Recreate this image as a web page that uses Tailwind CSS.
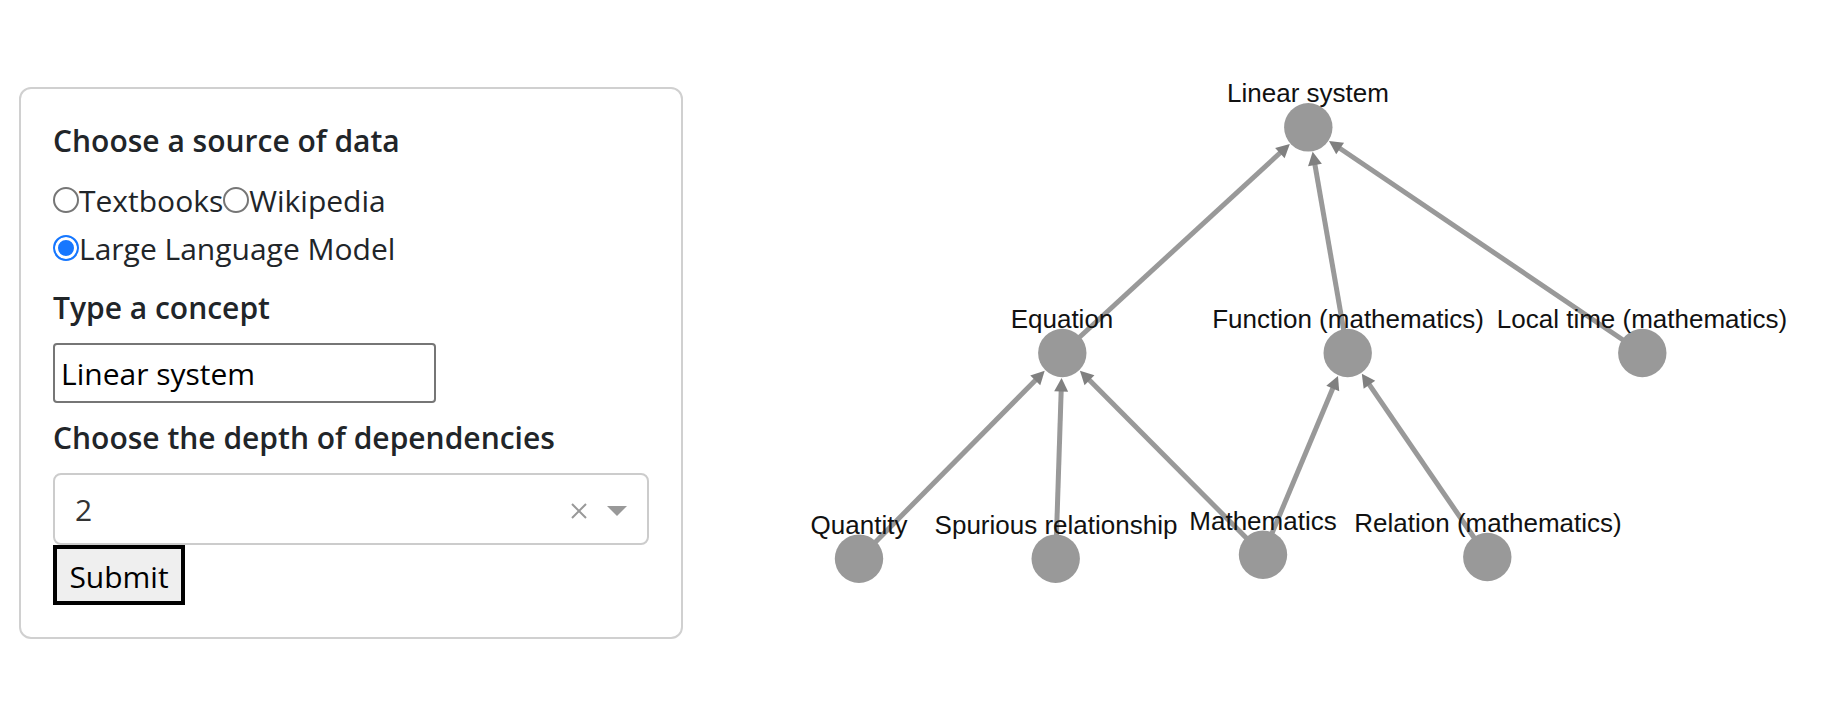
<!DOCTYPE html>
<html lang="en">
<head>
<meta charset="utf-8">
<meta name="viewport" content="width=device-width, initial-scale=1">
<title>Concept dependencies</title>
<script src="https://cdn.jsdelivr.net/npm/@tailwindcss/browser@4"></script>
</head>
<body class="bg-white font-['Open_Sans','Noto_Sans',sans-serif] text-[30px] text-[#212529]">
<main class="grid grid-cols-[664fr_1142fr] items-start pl-[19px]">
  <form class="mt-[87px] rounded-xl border-2 border-[#d0d0d0] p-8" onsubmit="return false">
    <fieldset>
      <legend class="mb-4 leading-[40px] font-semibold">Choose a source of data</legend>
      <div class="flex flex-wrap leading-[48px]">
        <label class="flex"><input type="radio" name="source" class="mt-2.5 size-[26px] appearance-none rounded-full border-2 border-[#767676] bg-white checked:border-[#1677ff] checked:bg-[#1677ff] checked:shadow-[inset_0_0_0_3px_white]">Textbooks</label>
        <label class="flex"><input type="radio" name="source" class="mt-2.5 size-[26px] appearance-none rounded-full border-2 border-[#767676] bg-white checked:border-[#1677ff] checked:bg-[#1677ff] checked:shadow-[inset_0_0_0_3px_white]">Wikipedia</label>
        <label class="flex"><input type="radio" name="source" checked class="mt-2.5 size-[26px] appearance-none rounded-full border-2 border-[#767676] bg-white checked:border-[#1677ff] checked:bg-[#1677ff] checked:shadow-[inset_0_0_0_3px_white]">Large Language Model</label>
      </div>
    </fieldset>
    <label for="concept" class="mt-4 mb-4 block leading-[38px] font-semibold">Type a concept</label>
    <input id="concept" type="text" value="Linear system" class="block h-[60px] w-[383px] max-w-full rounded-sm border-2 border-[#767676] px-1.5 text-black">
    <label for="depth" class="mt-4 mb-4 block leading-[38px] font-semibold">Choose the depth of dependencies</label>
    <div class="relative">
      <select id="depth" class="block h-[72px] w-full appearance-none rounded-lg border-2 border-[#ccc] bg-white px-5 text-[#333]">
        <option>1</option><option selected>2</option><option>3</option>
      </select>
      <div class="pointer-events-none absolute inset-y-0 right-[22px] flex items-center gap-5 pt-1">
        <button type="button" aria-label="Clear" class="pointer-events-auto">
          <svg class="size-4" viewBox="0 0 16 16" fill="none" stroke="#999" stroke-width="2"><path d="M1 1 15 15M15 1 1 15"/></svg>
        </button>
        <svg class="h-[10px] w-5" viewBox="0 0 20 10" fill="#999"><path d="M0 0H20L10 10Z"/></svg>
      </div>
    </div>
    <button type="submit" class="block h-[60px] min-w-[132px] border-4 border-black bg-[#efefef] px-3 pt-1 leading-none text-black">Submit</button>
  </form>

  <svg class="w-full" viewBox="683 0 1142 703" role="img" aria-label="Dependency graph of Linear system">
    <defs>
      <marker id="arrow" markerUnits="userSpaceOnUse" markerWidth="30" markerHeight="30" orient="auto" overflow="visible">
        <path d="M-4.5-7 9 0-4.5 7Z" fill="#808080"/>
      </marker>
    </defs>
    <g stroke="#999" stroke-width="5" fill="none">
      <path marker-end="url(#arrow)" d="M1062.3 353 1283.2 150"/>
      <path marker-end="url(#arrow)" d="M1347.7 353 1314.2 160.5"/>
      <path marker-end="url(#arrow)" d="M1642.3 353 1336.4 146"/>
      <path marker-end="url(#arrow)" d="M859 558.7 1038.4 377.2"/>
      <path marker-end="url(#arrow)" d="M1055.7 558.7 1061.3 387"/>
      <path marker-end="url(#arrow)" d="M1263 554.7 1086.3 377.1"/>
      <path marker-end="url(#arrow)" d="M1263 554.7 1334.5 384.3"/>
      <path marker-end="url(#arrow)" d="M1487.3 557 1366.9 381.1"/>
    </g>
    <g fill="#999">
      <circle cx="1308.3" cy="127.3" r="24.2"/>
      <circle cx="1062.3" cy="353" r="24.2"/>
      <circle cx="1347.7" cy="353" r="24.2"/>
      <circle cx="1642.3" cy="353" r="24.2"/>
      <circle cx="859" cy="558.7" r="24.2"/>
      <circle cx="1055.7" cy="558.7" r="24.2"/>
      <circle cx="1263" cy="554.7" r="24.2"/>
      <circle cx="1487.3" cy="557" r="24.2"/>
    </g>
    <g class="font-['Liberation_Sans',sans-serif] text-[26px]" fill="#111" text-anchor="middle">
      <text x="1308" y="102">Linear system</text>
      <text x="1062" y="328">Equation</text>
      <text x="1348" y="328">Function (mathematics)</text>
      <text x="1642" y="328">Local time (mathematics)</text>
      <text x="859" y="534">Quantity</text>
      <text x="1056" y="534">Spurious relationship</text>
      <text x="1263" y="530">Mathematics</text>
      <text x="1488" y="532">Relation (mathematics)</text>
    </g>
  </svg>
</main>
</body>
</html>
